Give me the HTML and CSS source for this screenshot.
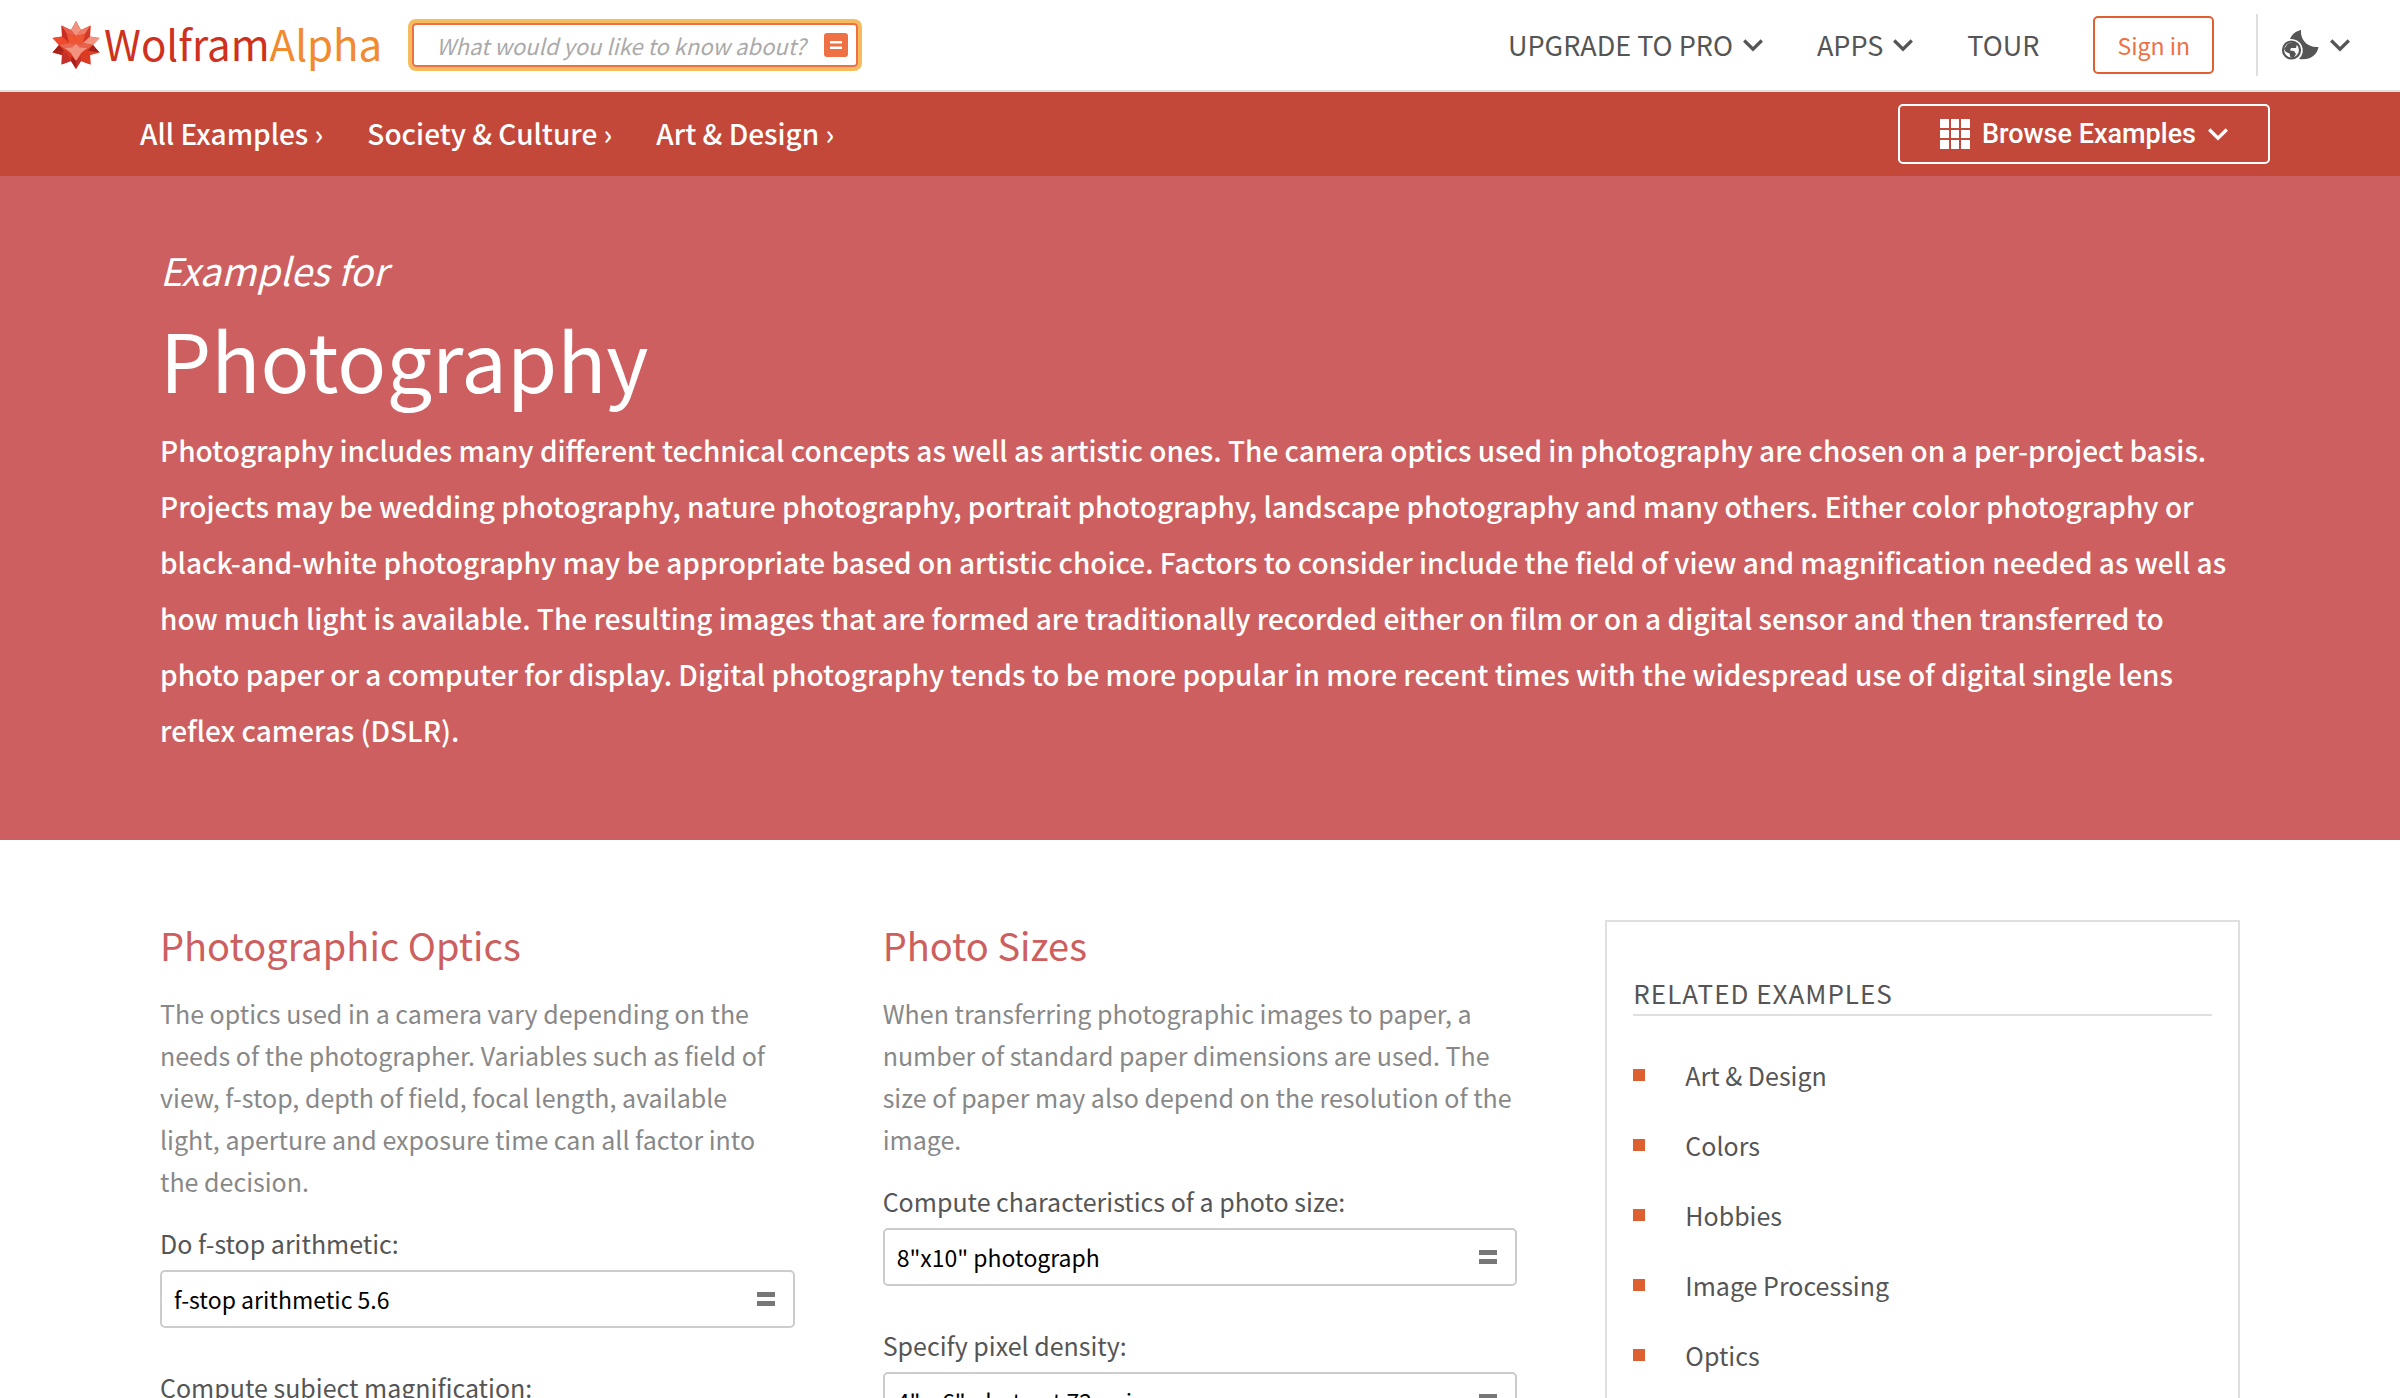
FILE: index.html
```html
<!DOCTYPE html>
<html lang="en">
<head>
<meta charset="utf-8">
<meta name="viewport" content="width=device-width, initial-scale=1">
<title>Wolfram|Alpha Examples: Photography</title>
<link rel="stylesheet" href="styles.css">
</head>
<body>
<svg class="symbols" aria-hidden="true">
  <symbol id="chevron" viewBox="0 0 20 13"><path d="M1.200 1.500 10 10.200 18.800 1.500" fill="none" stroke="currentColor" stroke-width="3.200"/></symbol>
  <symbol id="equals" viewBox="0 0 18 14"><path d="M0 0h18v5H0zM0 9h18v5H0z" fill="currentColor"/></symbol>
  <symbol id="equals-thin" viewBox="0 0 12 8"><path d="M0 0h12v2.500H0zM0 5.500h12V8H0z" fill="currentColor"/></symbol>
</svg>

<header class="site-header">
  <a class="logo" href="#" aria-label="WolframAlpha">
    <svg class="logo-mark" viewBox="0 0 48 48" aria-hidden="true">
      <path fill="#dd3a22" d="M24 0l5 9 9.500-4.500-.5 11 9.500 1.500-6.500 7 6.500 7.500-9.500 2.500.5 9.500-9.500-3.500L24 48l-5-8-9.500 3.500.5-9.500-9.500-2.500L7 24 .5 17l9.500-1.500-.5-11L19 9z"/>
      <path fill="#f29380" d="M24 0l5 9-5 6-5-6z"/>
      <path fill="#e8604c" d="M9.500 4.500L19 9l5 6-9-2z"/>
      <path fill="#c72f22" d="M9.500 4.500L15 13l2 9-7-6.500z"/>
      <path fill="#ee7d68" d="M38.500 4.500L33 13l-9 2 5-6z"/>
      <path fill="#d23a28" d="M38.500 4.500L33 13l-2 9 7-6.500z"/>
      <path fill="#ee5533" d="M15 13l9 2 9-2-2 9-7 2-7-2z"/>
      <path fill="#f29380" d="M47.500 17l-9.500-1.500-7 6.500 10 2z"/>
      <path fill="#ef4a2c" d="M.5 17l9.500-1.500 7 6.500-10 2z"/>
      <path fill="#ea6850" d="M17 22l7 2-5 8-12-8z"/>
      <path fill="#e9604a" d="M31 22l-7 2 5 8 12-8z"/>
      <path fill="#a3201b" d="M.5 31.500L7 24l5 6z"/>
      <path fill="#b3261e" d="M.5 31.500L12 30l-2 4z"/>
      <path fill="#a3201b" d="M47.500 31.500L41 24l-5 6z"/>
      <path fill="#e0452f" d="M47.500 31.500L36 30l2 4z"/>
      <path fill="#c4302c" d="M9.500 43.500L10 34l4-4 5 10z"/>
      <path fill="#dd3a22" d="M38.500 43.500L38 34l-4-4-5 10z"/>
      <path fill="#f29380" d="M24 22.500l3.500 4 7.500.5-5.500 4.500L24 40l-5.500-8.500L13 27l7.500-.5z"/>
      <path fill="#a81f1a" d="M19 40l.5-5 4.500 5v8z"/>
      <path fill="#c4302c" d="M29 40l-.5-5-4.500 5v8z"/>
    </svg>
    <span class="logo-text">Wolfram<span class="logo-alpha">Alpha</span></span>
  </a>
  <form class="search">
    <input class="search-input" type="text" aria-label="Search query" placeholder="What would you like to know about?">
    <button class="search-submit" type="button" aria-label="Compute"><svg width="12" height="8"><use href="#equals-thin"/></svg></button>
  </form>
  <nav class="main-nav" aria-label="Main">
    <button class="nav-item" type="button">UPGRADE TO PRO <svg class="chevron"><use href="#chevron"/></svg></button>
    <button class="nav-item" type="button">APPS <svg class="chevron"><use href="#chevron"/></svg></button>
    <a class="nav-item" href="#">TOUR</a>
    <a class="sign-in" href="#">Sign in</a>
    <button class="theme" type="button" aria-label="Theme">
      <svg class="theme-icon" viewBox="0 0 38 32" aria-hidden="true">
        <path fill="currentColor" d="M20 1c-1 9 6 18 17.500 17C36 27 28 31.500 18 30A11.500 11.500 0 0 0 9 10C11 5 15 2 20 1z"/>
        <circle cx="10.500" cy="21" r="8.500" fill="#fff" stroke="currentColor" stroke-width="2.200"/>
        <path fill="currentColor" d="M7 14.500l5-1.500 4 2-1 4h-5l-1 2.500 4 .5 2 3-2.500 4-3-.5-1-4-3.500-1.500L3 20z"/>
      </svg>
      <svg class="chevron"><use href="#chevron"/></svg>
    </button>
  </nav>
</header>

<div class="crumb-bar">
  <nav class="crumbs" aria-label="Breadcrumb">
    <a href="#">All Examples ›</a>
    <a href="#">Society &amp; Culture ›</a>
    <a href="#">Art &amp; Design ›</a>
  </nav>
  <button class="browse" type="button">
    <svg class="grid-icon" viewBox="0 0 30 30" aria-hidden="true"><path fill="currentColor" d="M0 0h9v9H0zM11 0h8v9h-8zM21 0h9v9h-9zM0 11h9v8H0zM11 11h8v8h-8zM21 11h9v8h-9zM0 21h9v9H0zM11 21h8v9h-8zM21 21h9v9h-9z"/></svg>
    Browse Examples
    <svg class="chevron"><use href="#chevron"/></svg>
  </button>
</div>

<main>
  <section class="hero">
    <h1><span class="eyebrow">Examples for</span> Photography</h1>
    <p>Photography includes many different technical concepts as well as artistic ones. The camera optics used in photography are chosen on a per-project basis. Projects may be wedding photography, nature photography, portrait photography, landscape photography and many others. Either color photography or black-and-white photography may be appropriate based on artistic choice. Factors to consider include the field of view and magnification needed as well as how much light is available. The resulting images that are formed are traditionally recorded either on film or on a digital sensor and then transferred to photo paper or a computer for display. Digital photography tends to be more popular in more recent times with the widespread use of digital single lens reflex cameras (DSLR).</p>
  </section>

  <div class="columns">
    <section class="topic">
      <h2>Photographic Optics</h2>
      <p>The optics used in a camera vary depending on the needs of the photographer. Variables such as field of view, f-stop, depth of field, focal length, available light, aperture and exposure time can all factor into the decision.</p>
      <form class="example">
        <label for="q1">Do f-stop arithmetic:</label>
        <div class="query"><input id="q1" type="text" value="f-stop arithmetic 5.6"><button type="button" aria-label="Compute"><svg width="18" height="14"><use href="#equals"/></svg></button></div>
      </form>
      <form class="example">
        <label for="q2">Compute subject magnification:</label>
        <div class="query"><input id="q2" type="text" value="subject magnification"><button type="button" aria-label="Compute"><svg width="18" height="14"><use href="#equals"/></svg></button></div>
      </form>
    </section>

    <section class="topic">
      <h2>Photo Sizes</h2>
      <p>When transferring photographic images to paper, a number of standard paper dimensions are used. The size of paper may also depend on the resolution of the image.</p>
      <form class="example">
        <label for="q3">Compute characteristics of a photo size:</label>
        <div class="query"><input id="q3" type="text" value="8&quot;x10&quot; photograph"><button type="button" aria-label="Compute"><svg width="18" height="14"><use href="#equals"/></svg></button></div>
      </form>
      <form class="example">
        <label for="q4">Specify pixel density:</label>
        <div class="query"><input id="q4" type="text" value="4&quot; x 6&quot; photo at 72 ppi"><button type="button" aria-label="Compute"><svg width="18" height="14"><use href="#equals"/></svg></button></div>
      </form>
    </section>

    <aside class="related">
      <h2>Related Examples</h2>
      <ul>
        <li><a href="#">Art &amp; Design</a></li>
        <li><a href="#">Colors</a></li>
        <li><a href="#">Hobbies</a></li>
        <li><a href="#">Image Processing</a></li>
        <li><a href="#">Optics</a></li>
      </ul>
    </aside>
  </div>
</main>
</body>
</html>
```
FILE: styles.css
```css
* { box-sizing: border-box; }

body {
  margin: 0;
  background: #fff;
  color: #555;
  font: 25px/42px "Noto Sans CJK SC", "Noto Sans", sans-serif;
}

a { color: inherit; text-decoration: none; }
button, input { font: inherit; color: inherit; }
button { padding: 0; border: 0; background: none; cursor: pointer; }
h1, h2, p, ul { margin: 0; padding: 0; font-weight: 400; }
svg { display: block; flex: none; }
.symbols { position: absolute; width: 0; height: 0; }
.chevron { width: 20px; height: 13px; }

/* Top bar */
.site-header {
  display: flex;
  align-items: center;
  height: 92px;
  padding: 0 50px 0 52px;
  border-bottom: 2px solid #dfdfdf;
}
.logo { display: flex; align-items: center; gap: 4px; }
.logo-mark { width: 48px; height: 48px; }
.logo-text {
  padding-bottom: 4px;
  color: #cf3120;
  font-size: 42px;
  line-height: 48px;
}
.logo-alpha { color: #f28a30; }

.search {
  display: flex;
  align-items: center;
  width: 446px;
  height: 44px;
  margin-left: 30px;
  padding: 0 8px 0 22px;
  border: 2px solid #ee7044;
  border-radius: 4px;
  box-shadow: 0 0 0 4px #f6bb5d;
}
.search-input {
  flex: 1;
  min-width: 0;
  padding: 0;
  border: 0;
  outline: 0;
  background: none;
  font-size: 22px;
  line-height: 32px;
  font-style: italic;
}
.search-input::placeholder { color: #aaa; opacity: 1; }
.search-submit {
  display: grid;
  place-items: center;
  width: 24px;
  height: 24px;
  border-radius: 3px;
  background: #ee7044;
  color: #fff;
}

.main-nav { display: flex; align-items: center; gap: 54px; margin-left: auto; }
.nav-item { display: flex; align-items: center; gap: 10px; font-size: 27px; }
.sign-in {
  padding: 6px 22px;
  border: 2px solid #dd6030;
  border-radius: 5px;
  color: #ee7044;
  font-size: 23px;
}
.theme {
  display: flex;
  align-items: center;
  gap: 11px;
  height: 62px;
  margin-left: -12px;
  padding-left: 23px;
  border-left: 2px solid #dfdfdf;
}
.theme-icon { width: 38px; height: 32px; }

/* Breadcrumbs */
.crumb-bar {
  display: flex;
  align-items: center;
  justify-content: space-between;
  height: 84px;
  padding: 0 130px 0 140px;
  background: #c3483a;
  color: #fff;
}
.crumbs { display: flex; gap: 44px; padding-bottom: 2px; font-size: 28px; font-weight: 500; }
.browse {
  display: flex;
  align-items: center;
  gap: 12px;
  height: 60px;
  padding: 0 40px;
  border: 2px solid #fff;
  border-radius: 5px;
  font: 500 27px/42px Roboto, sans-serif;
}
.grid-icon { width: 30px; height: 30px; }

/* Hero */
.hero { padding: 70px 160px 82px; background: #cd5f60; color: #fff; }
.hero h1 { font-size: 81px; line-height: 128px; }
.eyebrow { display: block; font-size: 38px; line-height: 48px; font-style: italic; }
.hero p { font-size: 28px; font-weight: 500; line-height: 56px; }

/* Topics and related links */
.columns {
  display: grid;
  grid-template-columns: repeat(3, 1fr);
  gap: 88px;
  padding: 80px 160px;
}
.topic h2 { color: #cd5f60; font-size: 38px; line-height: 50px; }
.topic p { margin-top: 22px; padding-right: 4px; color: #888; }
.example { margin-top: 20px; }
.example + .example { margin-top: 38px; }
.example label { display: block; }
.query {
  display: flex;
  align-items: center;
  height: 58px;
  margin-top: 6px;
  padding: 0 18px 0 12px;
  border: 2px solid #ccc;
  border-radius: 5px;
}
.query input {
  flex: 1;
  min-width: 0;
  padding: 0;
  border: 0;
  background: none;
  color: #000;
  font-size: 23px;
  line-height: 36px;
}
.query button { color: #777; }

.related { border: 2px solid #dfdfdf; padding: 50px 26px; }
.related h2 {
  border-bottom: 2px solid #dfdfdf;
  font-size: 26px;
  line-height: 42px;
  letter-spacing: 1px;
  text-transform: uppercase;
}
.related ul { display: grid; gap: 28px; margin-top: 38px; list-style: none; }
.related li { display: flex; align-items: center; gap: 40px; }
.related li::before { content: ""; width: 12px; height: 12px; background: #dd6030; }
```
